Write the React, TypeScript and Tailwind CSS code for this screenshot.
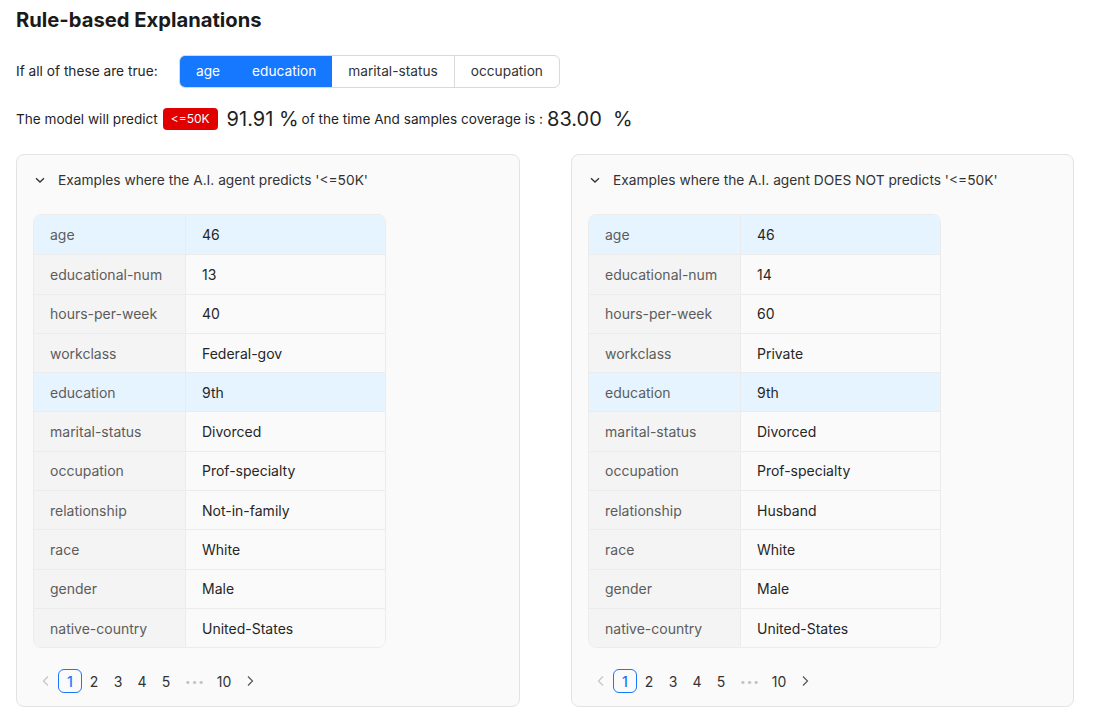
import React from "react";

const font = { fontFamily: "Inter, 'Noto Sans', sans-serif" };

type Row = [string, string, boolean?];

const left: Row[] = [
  ["age", "46", true],
  ["educational-num", "13"],
  ["hours-per-week", "40"],
  ["workclass", "Federal-gov"],
  ["education", "9th", true],
  ["marital-status", "Divorced"],
  ["occupation", "Prof-specialty"],
  ["relationship", "Not-in-family"],
  ["race", "White"],
  ["gender", "Male"],
  ["native-country", "United-States"],
];

const right: Row[] = [
  ["age", "46", true],
  ["educational-num", "14"],
  ["hours-per-week", "60"],
  ["workclass", "Private"],
  ["education", "9th", true],
  ["marital-status", "Divorced"],
  ["occupation", "Prof-specialty"],
  ["relationship", "Husband"],
  ["race", "White"],
  ["gender", "Male"],
  ["native-country", "United-States"],
];

function Chevron() {
  return (
    <svg width="12" height="12" viewBox="0 0 12 12" fill="none" stroke="#333" strokeWidth="1.3">
      <path d="M2 4.2 L6 8 L10 4.2" />
    </svg>
  );
}

function Pagination() {
  return (
    <div className="flex items-center h-6 text-[14px] text-[#333]">
      <span className="w-6 flex items-center justify-center text-[#c4c4c4]">
        <svg width="10" height="12" viewBox="0 0 10 12" fill="none" stroke="currentColor" strokeWidth="1.2">
          <path d="M7 1.5 L2.5 6 L7 10.5" />
        </svg>
      </span>
      <span className="w-6 h-6 flex items-center justify-center border border-[#1677ff] rounded-md text-[#1677ff] font-medium">1</span>
      <span className="w-6 text-center">2</span>
      <span className="w-6 text-center">3</span>
      <span className="w-6 text-center">4</span>
      <span className="w-6 text-center">5</span>
      <span className="w-[34px] text-center text-[#c4c4c4] tracking-[1px] text-[10px]">•••</span>
      <span className="w-6 text-center">10</span>
      <span className="w-[28px] flex items-center justify-center text-[#555]">
        <svg width="10" height="12" viewBox="0 0 10 12" fill="none" stroke="currentColor" strokeWidth="1.2">
          <path d="M3 1.5 L7.5 6 L3 10.5" />
        </svg>
      </span>
    </div>
  );
}

function Card({ title, rows }: { title: string; rows: Row[] }) {
  return (
    <div className="border border-[#e3e3e3] rounded-lg bg-[#fafafa] h-[553px] flex flex-col">
      <div className="flex items-center h-[50px] pl-[17px] gap-[12px] text-[13.75px] text-[#333]">
        <Chevron />
        <span>{title}</span>
      </div>
      <div className="pl-[16px] pt-[9px]">
        <div className="w-[353px] border border-[#ececec] rounded-lg overflow-hidden">
          {rows.map(([k, v, hl], i) => (
            <div
              key={k}
              className={`flex h-[39.3px] text-[14px] ${i > 0 ? "border-t border-[#ececec]" : ""}`}
            >
              <div
                className={`w-[152px] flex items-center pl-[16px] text-[#5c5c5c] border-r border-[#ececec] ${
                  hl ? "bg-[#e6f4ff]" : "bg-[#f4f4f4]"
                }`}
              >
                {k}
              </div>
              <div
                className={`flex-1 flex items-center pl-[16px] text-[#262626] ${
                  hl ? "bg-[#e6f4ff]" : "bg-[#fafafa]"
                }`}
              >
                {v}
              </div>
            </div>
          ))}
        </div>
      </div>
      <div className="pl-[17px] pt-[21px]">
        <Pagination />
      </div>
    </div>
  );
}

export default function App() {
  return (
    <div className="bg-white w-[1097px] h-[720px] pl-[16px] pt-[6px] text-[#1f1f1f]" style={font}>
      <h1 className="text-[20.2px] font-bold h-[28px] leading-[28px] text-[#1a1a1a]">Rule-based Explanations</h1>
      <div className="flex items-center mt-[21px] h-[33px]">
        <span className="text-[13.7px] text-[#262626] w-[163px]">If all of these are true:</span>
        <div className="flex h-[33px] border border-[#d9d9d9] rounded-md overflow-hidden text-[13.7px]">
          <div className="flex bg-[#1677ff] text-white">
            <span className="px-[16px] flex items-center">age</span>
            <span className="px-[16px] flex items-center">education</span>
          </div>
          <span className="px-[16px] flex items-center text-[#333]">marital-status</span>
          <span className="px-[16px] flex items-center text-[#333] border-l border-[#d9d9d9]">occupation</span>
        </div>
      </div>
      <div className="flex items-center mt-[19px] h-[24px] text-[13.6px] text-[#1f1f1f]">
        <span>The model will predict</span>
        <span className="ml-[5px] h-[22px] px-[8px] flex items-center bg-[#e00000] text-white text-[12px] rounded">&lt;=50K</span>
        <span className="ml-[9px] text-[20px] text-[#1f1f1f]">91.91 %</span>
        <span className="ml-[3px]">of the time And samples coverage is :</span>
        <span className="ml-[4px] text-[20px]">83.00&nbsp; %</span>
      </div>
      <div className="grid grid-cols-[504px_503px] gap-[51px] mt-[23px]">
        <Card title="Examples where the A.I. agent predicts '<=50K'" rows={left} />
        <Card title="Examples where the A.I. agent DOES NOT predicts '<=50K'" rows={right} />
      </div>
    </div>
  );
}
